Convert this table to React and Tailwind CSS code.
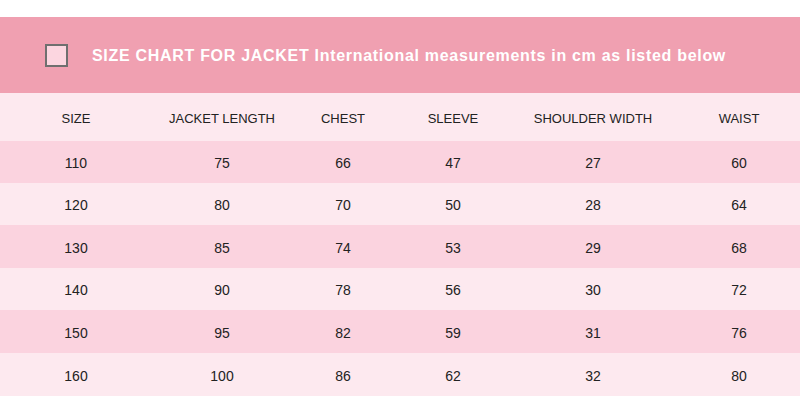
export default function App() {
  const cols = [
    { w: "w-[152px]", label: "SIZE" },
    { w: "w-[140px]", label: "JACKET LENGTH" },
    { w: "w-[102px]", label: "CHEST" },
    { w: "w-[118px]", label: "SLEEVE" },
    { w: "w-[162px]", label: "SHOULDER WIDTH" },
    { w: "w-[130px]", label: "WAIST" },
  ];
  const rows = [
    ["110", "75", "66", "47", "27", "60"],
    ["120", "80", "70", "50", "28", "64"],
    ["130", "85", "74", "53", "29", "68"],
    ["140", "90", "78", "56", "30", "72"],
    ["150", "95", "82", "59", "31", "76"],
    ["160", "100", "86", "62", "32", "80"],
  ];
  const heights = ["h-[42px]", "h-[42px]", "h-[43px]", "h-[42px]", "h-[43px]", "h-[43px]"];
  return (
    <div className="w-[800px] h-[414px] overflow-hidden bg-white pt-[17px] font-[family-name:Liberation_Sans,Arial,sans-serif] text-[13px] text-[#222]">
      <div className="h-[76px] bg-[#f0a0b1] flex items-center pl-[45px]">
        <div className="w-[23px] h-[23px] border-2 border-[#6f6f6f] bg-[#fcd6e0]" />
        <div className="ml-[24px] pt-[2px] text-white font-bold text-[16px] tracking-[0.7px]">
          SIZE CHART FOR JACKET International measurements in cm as listed below
        </div>
      </div>
      <div className="h-[48px] bg-[#fde9ef] flex items-center pt-[4px]">
        {cols.map((c, i) => (
          <div key={i} className={`${c.w} shrink-0 text-center`}>{c.label}</div>
        ))}
      </div>
      {rows.map((r, ri) => (
        <div
          key={ri}
          className={`${heights[ri]} flex items-center pt-[3px] ${ri % 2 === 0 ? "bg-[#fbd3df]" : "bg-[#fde9ef]"}`}
        >
          {r.map((v, i) => (
            <div key={i} className={`${cols[i].w} shrink-0 text-center text-[14px]`}>{v}</div>
          ))}
        </div>
      ))}
    </div>
  );
}
